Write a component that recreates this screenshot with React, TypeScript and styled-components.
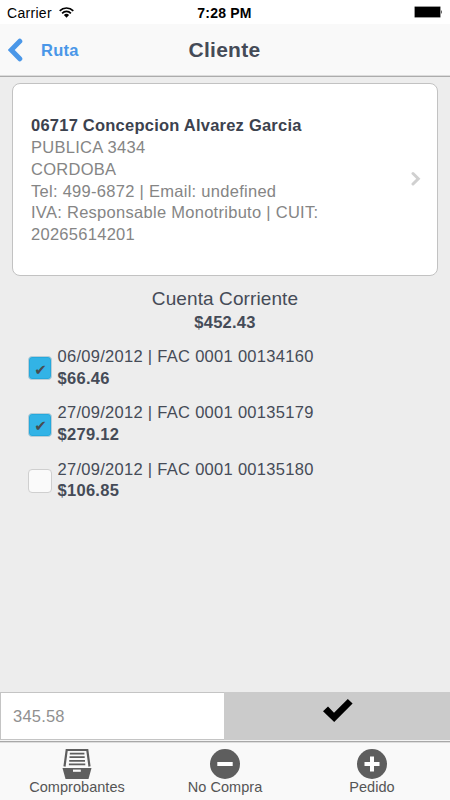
import React, { useState } from 'react';
import styled, { createGlobalStyle } from 'styled-components';

const GlobalStyle = createGlobalStyle`
  * { box-sizing: border-box; }
  body {
    margin: 0;
    font-family: "Liberation Sans", Arial, sans-serif;
    font-size: 16.5px;
    letter-spacing: 0.25px;
    color: #454b57;
    background: #ededed;
  }
`;

const Screen = styled.div`
  display: flex;
  flex-direction: column;
  width: 450px;
  height: 800px;
  background: #ededed;
  overflow: hidden;
`;

const StatusBar = styled.div`
  display: grid;
  grid-template-columns: 1fr auto 1fr;
  align-items: center;
  height: 24px;
  padding: 1px 8px 0 7px;
  background: #fff;
  color: #000;
  font-size: 14px;
  letter-spacing: 0.3px;
`;

const Carrier = styled.div`
  display: flex;
  align-items: center;
  gap: 7px;
`;

const Clock = styled.div`
  font-weight: bold;
  font-size: 14px;
  letter-spacing: 0.2px;
`;

const BatterySlot = styled.div`
  display: flex;
  justify-content: flex-end;
  margin-top: -1px;
`;

const Header = styled.header`
  display: grid;
  grid-template-columns: 1fr auto 1fr;
  align-items: center;
  height: 53px;
  padding: 0 9px 1px 8px;
  background: #f9f9f9;
  border-bottom: 1px solid #acacac;
  box-shadow: inset 0 -1px #dcdcdc;
`;

const BackLink = styled.a`
  display: flex;
  align-items: center;
  gap: 18px;
  color: #4a97e8;
  font-weight: bold;
`;

const BackLabel = styled.span`
  padding-top: 2px;
`;

const Title = styled.h1`
  margin: 0;
  font-size: 21px;
  letter-spacing: 0.25px;
`;

const Content = styled.main`
  flex: 1;
  padding: 6px 12px 0;
`;

const ClientCard = styled.section`
  display: flex;
  align-items: center;
  justify-content: space-between;
  height: 193px;
  padding: 0 16px 0 18px;
  background: #fff;
  border: 1px solid #c2c2c2;
  border-radius: 8px;
`;

const ClientInfo = styled.div`
  width: 310px;
  margin-top: 2px;
  line-height: 21.7px;
  letter-spacing: 0.28px;
  color: #858585;
`;

const ClientName = styled.div`
  margin-bottom: 0.5px;
  font-weight: bold;
  letter-spacing: 0.23px;
  color: #3c424e;
  white-space: nowrap;
`;

const Account = styled.section`
  display: flex;
  flex-direction: column;
  align-items: center;
  padding-top: 11px;
`;

const AccountTitle = styled.div`
  font-size: 19px;
  line-height: 24px;
  letter-spacing: 0.1px;
`;

const AccountTotal = styled.strong`
  line-height: 22px;
`;

const InvoiceList = styled.div`
  display: flex;
  flex-direction: column;
  gap: 13px;
  padding: 13px 0 0 16px;
`;

const InvoiceRow = styled.label`
  display: flex;
  align-items: center;
  gap: 5.5px;
  height: 43.4px;
  line-height: 21.7px;
  letter-spacing: 0.29px;
`;

const Box = styled.span<{ $checked: boolean }>`
  display: flex;
  align-items: center;
  justify-content: center;
  width: 24px;
  height: 24px;
  margin-top: 1px;
  padding: 3px 0 0 1px;
  border: 1px solid ${(p) => (p.$checked ? '#b9cdd6' : '#cfcfcf')};
  border-radius: 4px;
  background: ${(p) => (p.$checked ? '#32b3e6' : '#fafafa')};
  box-shadow: ${(p) => (p.$checked ? 'inset 0 0 0 1px #25a9dd' : 'none')};
  color: #484c50;
  font: 15px "DejaVu Sans", sans-serif;
  letter-spacing: 0;
`;

const HiddenCheck = styled.input`
  display: none;
`;

const InvoiceText = styled.span`
  display: flex;
  flex-direction: column;
  white-space: nowrap;
`;

const PaymentBar = styled.div`
  display: flex;
  height: 48px;
  background: #cbcbcb;
`;

const Amount = styled.input`
  width: 224px;
  height: 48px;
  margin: 0;
  padding: 0 12px;
  border: 1px solid #c4c4c4;
  border-right: 0;
  border-radius: 0;
  outline: 0;
  background: #fff;
  font: 16.5px "Liberation Sans", Arial, sans-serif;
  letter-spacing: 0.2px;
  color: #909090;
`;

const Confirm = styled.button`
  flex: 1;
  display: flex;
  justify-content: center;
  align-items: flex-start;
  margin: 0;
  padding: 7px 0 0 1px;
  border: 0;
  background: #cbcbcb;
`;

const TabBar = styled.nav`
  display: grid;
  grid-template-columns: 154px 142px 152px;
  height: 60px;
  border-top: 1px solid #f4f4f4;
  background: #f9f9f9;
  box-shadow: inset 0 1px #a8a8a8, inset 0 2px #dedede;
`;

const Tab = styled.a`
  display: flex;
  flex-direction: column;
  align-items: center;
  padding-top: 8px;
  color: #555;
  font-size: 14.5px;
  line-height: 16px;
  letter-spacing: 0.05px;
`;

const TabIcon = styled.svg`
  width: 30px;
  height: 30px;
`;

const WifiIcon = () => (
  <svg width="15" height="11" viewBox="0 0 15 11" fill="none" stroke="#000" strokeWidth="1.7">
    <path d="M.7 3.8a9.7 9.7 0 0 1 13.6 0M3.1 6.3a6.2 6.2 0 0 1 8.8 0" />
    <path d="M7.5 10.8 4.9 8.1a3.7 3.7 0 0 1 5.2 0z" fill="#000" stroke="none" />
  </svg>
);

const BatteryIcon = () => (
  <svg width="30" height="12" viewBox="0 0 30 12">
    <rect x="2.5" y=".5" width="26" height="11" rx="1" fill="#000" stroke="#999" />
    <path d="M29.3 4q1.4 2 0 4z" fill="#000" />
  </svg>
);

const BackIcon = () => (
  <svg width="15" height="24" viewBox="0 0 15 24" fill="none" stroke="#4a97e8" strokeWidth="5" strokeLinecap="round">
    <path d="M11.8 3.2 3.2 12l8.6 8.8" />
  </svg>
);

const ForwardIcon = () => (
  <svg width="10" height="18" viewBox="0 0 10 18" fill="none" stroke="#d0d0d0" strokeWidth="3" strokeLinecap="round">
    <path d="M2 2.5 7.3 7.7 2 13" />
  </svg>
);

const ConfirmIcon = () => (
  <svg width="30" height="24" viewBox="0 0 30 24">
    <path d="M0 12.2 5 7.4l6 6.3L24.8 0l4.8 4.4L11.2 23z" fill="#000" />
  </svg>
);

const DrawerIcon = () => (
  <TabIcon viewBox="0 0 30 30">
    <path d="M2.5 17.5 4.7 1h20.6l2.2 16.5" fill="none" stroke="#5e5e5e" strokeWidth="2.2" />
    <path d="M7.8 4.7h14.6M7.5 8.2h15.2M7.2 11.8h15.8M6.9 15.4h16.4" stroke="#5e5e5e" strokeWidth="1.7" />
    <path d="M.5 19h29l-3 11h-23z" fill="#5e5e5e" />
    <path d="M11 20.6h7.8v2.2H11z" fill="#f9f9f9" />
  </TabIcon>
);

const CircleIcon = ({ plus = false }: { plus?: boolean }) => (
  <TabIcon viewBox="0 0 30 30">
    <circle cx="15" cy="15" r="15" fill="#5e5e5e" />
    <path d={plus ? 'M7.5 15h15M15 7.5v15' : 'M7.3 15h15.4'} stroke="#fff" strokeWidth="4" />
  </TabIcon>
);

const initialInvoices = [
  { text: '06/09/2012 | FAC 0001 00134160', amount: '$66.46', checked: true },
  { text: '27/09/2012 | FAC 0001 00135179', amount: '$279.12', checked: true },
  { text: '27/09/2012 | FAC 0001 00135180', amount: '$106.85', checked: false },
];

export default function App() {
  const [invoices, setInvoices] = useState(initialInvoices);
  const toggle = (index: number) =>
    setInvoices((list) => list.map((it, i) => (i === index ? { ...it, checked: !it.checked } : it)));

  return (
    <Screen>
      <GlobalStyle />
      <StatusBar>
        <Carrier>
          Carrier
          <WifiIcon />
        </Carrier>
        <Clock>7:28 PM</Clock>
        <BatterySlot>
          <BatteryIcon />
        </BatterySlot>
      </StatusBar>
      <Header>
        <BackLink>
          <BackIcon />
          <BackLabel>Ruta</BackLabel>
        </BackLink>
        <Title>Cliente</Title>
      </Header>
      <Content>
        <ClientCard>
          <ClientInfo>
            <ClientName>06717 Concepcion Alvarez Garcia</ClientName>
            <div>PUBLICA 3434</div>
            <div>CORDOBA</div>
            <div>Tel: 499-6872 | Email: undefined</div>
            <div>IVA: Responsable Monotributo | CUIT: 20265614201</div>
          </ClientInfo>
          <ForwardIcon />
        </ClientCard>
        <Account>
          <AccountTitle>Cuenta Corriente</AccountTitle>
          <AccountTotal>$452.43</AccountTotal>
        </Account>
        <InvoiceList>
          {invoices.map((it, i) => (
            <InvoiceRow key={it.text}>
              <HiddenCheck type="checkbox" checked={it.checked} onChange={() => toggle(i)} />
              <Box $checked={it.checked}>{it.checked ? '✔' : ''}</Box>
              <InvoiceText>
                <span>{it.text}</span>
                <strong>{it.amount}</strong>
              </InvoiceText>
            </InvoiceRow>
          ))}
        </InvoiceList>
      </Content>
      <PaymentBar>
        <Amount defaultValue="345.58" />
        <Confirm aria-label="Confirmar">
          <ConfirmIcon />
        </Confirm>
      </PaymentBar>
      <TabBar>
        <Tab>
          <DrawerIcon />
          Comprobantes
        </Tab>
        <Tab>
          <CircleIcon />
          No Compra
        </Tab>
        <Tab>
          <CircleIcon plus />
          Pedido
        </Tab>
      </TabBar>
    </Screen>
  );
}
